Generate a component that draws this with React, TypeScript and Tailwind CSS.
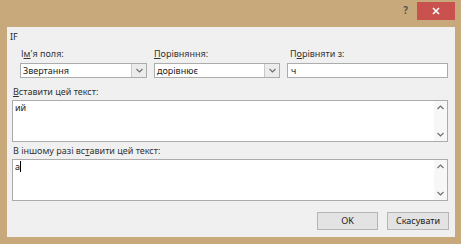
import React from "react";

const Chevron = ({ up = false }: { up?: boolean }) => (
  <svg width="7" height="5" viewBox="0 0 7 5" className="block">
    <path
      d={up ? "M0.5 4 L3.5 1 L6.5 4" : "M0.5 1 L3.5 4 L6.5 1"}
      fill="none"
      stroke="#707070"
      strokeWidth="1.2"
    />
  </svg>
);

const Select = ({ value, w }: { value: string; w: string }) => (
  <div className={`${w} h-[15px] flex bg-white border border-[#acacac]`}>
    <div className="flex-1 pl-[2px] leading-[13px] text-[9px] text-[#222]">{value}</div>
    <div className="w-[15px] flex items-center justify-center bg-[#ececec] border-l border-[#c8c8c8]">
      <Chevron />
    </div>
  </div>
);

const TextArea = ({ value, cursor = false }: { value: string; cursor?: boolean }) => (
  <div className="ml-[5px] w-[436px] h-[42px] flex bg-white border border-[#acacac]">
    <div className="flex-1 pl-[2px] pt-[1px] text-[9px] leading-[12px] text-[#222] flex items-start">
      <span>{value}</span>
      {cursor && <span className="inline-block w-[1px] h-[11px] bg-black" />}
    </div>
    <div className="w-[13px] flex flex-col items-center justify-between py-[4px] bg-[#f7f7f7]">
      <Chevron up />
      <Chevron />
    </div>
  </div>
);

export default function App() {
  return (
    <div
      className="w-[461px] h-[244px] bg-[#c8a97b] flex flex-col overflow-hidden"
      style={{ fontFamily: '"Noto Sans", "Open Sans", sans-serif' }}
    >
      <div className="h-[27px] flex items-start justify-end pr-[6px]">
        <div className="mt-[4px] mr-[9px] text-[10px] font-bold text-[#555] leading-[12px]">?</div>
        <div className="mt-[2px] w-[38px] h-[18px] bg-[#c9524f] flex items-center justify-center">
          <svg width="8" height="8" viewBox="0 0 8 8">
            <path d="M1 1 L7 7 M7 1 L1 7" stroke="#fff" strokeWidth="1.6" />
          </svg>
        </div>
      </div>
      <div className="ml-[7px] mr-[6px] mb-[7px] flex-1 bg-[#f0f0f0] flex flex-col">
        <div className="pl-[3px] pt-[4px] text-[9px] leading-[12px] text-[#222]">IF</div>
        <div className="flex mt-[5px] pl-[13px]">
          <div className="flex flex-col w-[134px]">
            <div className="pl-[1px] text-[9px] leading-[12px] text-[#333]">
              І<span className="underline">м</span>'я поля:
            </div>
            <div className="mt-[3px]">
              <Select value="Звертання" w="w-[127px]" />
            </div>
          </div>
          <div className="flex flex-col w-[133px]">
            <div className="text-[9px] leading-[12px] text-[#333]">
              <span className="underline">П</span>орівняння:
            </div>
            <div className="mt-[3px]">
              <Select value="дорівнює" w="w-[126px]" />
            </div>
          </div>
          <div className="flex flex-col">
            <div className="pl-[3px] text-[9px] leading-[12px] text-[#333]">
              П<span className="underline">о</span>рівняти з:
            </div>
            <div className="mt-[3px] w-[161px] h-[15px] bg-white border border-[#acacac] pl-[3px] text-[9px] leading-[13px] text-[#222]">
              ч
            </div>
          </div>
        </div>
        <div className="mt-[8px] pl-[6px] text-[9px] leading-[12px] text-[#333]">
          <span className="underline">В</span>ставити цей текст:
        </div>
        <div className="mt-[2px]">
          <TextArea value="ий" />
        </div>
        <div className="mt-[3px] pl-[6px] text-[9px] leading-[12px] text-[#333]">
          В іншому разі вс<span className="underline">т</span>авити цей текст:
        </div>
        <div className="mt-[2px]">
          <TextArea value="а" cursor />
        </div>
        <div className="flex justify-end gap-[9px] mt-[11px] pr-[6px]">
          <div className="w-[61px] h-[18px] bg-[#e3e3e3] border border-[#b5b5b5] flex items-center justify-center text-[9px] text-[#222]">
            OK
          </div>
          <div className="w-[62px] h-[18px] bg-[#e3e3e3] border border-[#b5b5b5] flex items-center justify-center text-[9px] text-[#222]">
            Скасувати
          </div>
        </div>
      </div>
    </div>
  );
}
